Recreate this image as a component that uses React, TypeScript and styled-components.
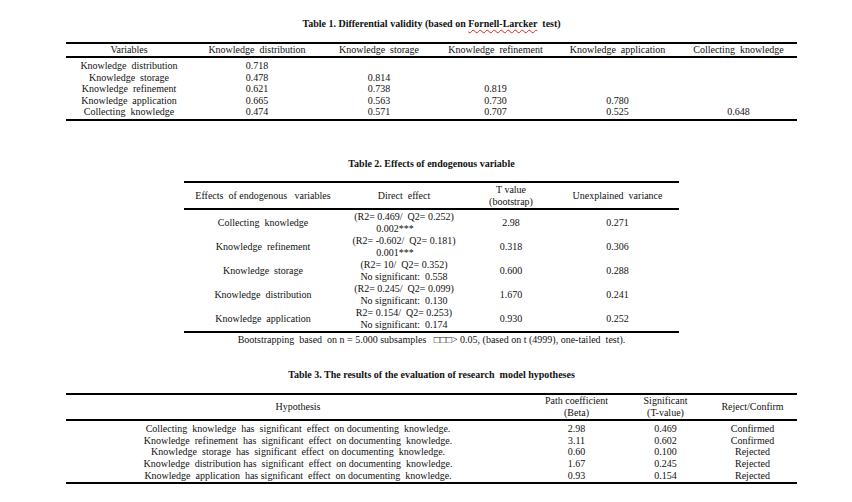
import React from "react";
import styled, { createGlobalStyle } from "styled-components";

const GlobalStyle = createGlobalStyle`
  html, body {
    margin: 0;
    padding: 0;
    background: #fff;
  }
  body {
    font-family: "Liberation Serif", "Times New Roman", serif;
    font-size: 10px;
    color: #111;
  }
`;

const TABLE1_HEAD = [
  "Variables",
  "Knowledge  distribution",
  "Knowledge  storage",
  "Knowledge  refinement",
  "Knowledge  application",
  "Collecting  knowledge",
];

const TABLE1_ROWS = [
  ["Knowledge  distribution", "0.718", "", "", "", ""],
  ["Knowledge  storage", "0.478", "0.814", "", "", ""],
  ["Knowledge  refinement", "0.621", "0.738", "0.819", "", ""],
  ["Knowledge  application", "0.665", "0.563", "0.730", "0.780", ""],
  ["Collecting  knowledge", "0.474", "0.571", "0.707", "0.525", "0.648"],
];

const TABLE2_ROWS = [
  { name: "Collecting  knowledge", r2: "(R2= 0.469/  Q2= 0.252)", sig: "0.002***", stars: true, t: "2.98", u: "0.271" },
  { name: "Knowledge  refinement", r2: "(R2= -0.602/  Q2= 0.181)", sig: "0.001***", stars: true, t: "0.318", u: "0.306" },
  { name: "Knowledge  storage", r2: "(R2= 10/  Q2= 0.352)", sig: "No significant:  0.558", stars: false, t: "0.600", u: "0.288" },
  { name: "Knowledge  distribution", r2: "(R2= 0.245/  Q2= 0.099)", sig: "No significant:  0.130", stars: false, t: "1.670", u: "0.241" },
  { name: "Knowledge  application", r2: "R2= 0.154/  Q2= 0.253)", sig: "No significant:  0.174", stars: false, t: "0.930", u: "0.252" },
];

const TABLE3_ROWS = [
  ["Collecting  knowledge  has  significant  effect  on documenting  knowledge.", "2.98", "0.469", "Confirmed"],
  ["Knowledge  refinement  has  significant  effect  on documenting  knowledge.", "3.11", "0.602", "Confirmed"],
  ["Knowledge  storage  has  significant  effect  on documenting  knowledge.", "0.60", "0.100", "Rejected"],
  ["Knowledge  distribution has  significant  effect  on documenting  knowledge.", "1.67", "0.245", "Rejected"],
  ["Knowledge  application  has significant  effect  on documenting  knowledge.", "0.93", "0.154", "Rejected"],
];

const COLS1 = "126px 130px 114px 119px 125px 117px";
const COLS2 = "158px 124px 90px 123px";
const COLS3 = "464px 93px 85px 89px";

function App() {
  return (
    <>
      <GlobalStyle />
      <Page>
        <Title>
          Table 1. Differential validity (based on <Misspelled>Fornell-Larcker</Misspelled>  test)
        </Title>
        <Table $width={731} $gap={12}>
          <Head $cols={COLS1} $h={12}>
            {TABLE1_HEAD.map((h) => (
              <Cell key={h}>{h}</Cell>
            ))}
          </Head>
          <Body $pt={2} $pb={1.5}>
            {TABLE1_ROWS.map((r) => (
              <Row key={r[0]} $cols={COLS1} $h={11.5}>
                {r.map((c, i) => (
                  <Cell key={i}>{c}</Cell>
                ))}
              </Row>
            ))}
          </Body>
        </Table>

        <Title $mt={37}>Table 2. Effects of endogenous variable</Title>
        <Table $width={495} $gap={11}>
          <Head $cols={COLS2} $h={25}>
            <Cell>Effects  of endogenous   variables</Cell>
            <Cell>Direct  effect</Cell>
            <Stack>
              <span>T value</span>
              <span>(bootstrap)</span>
            </Stack>
            <Cell>Unexplained  variance</Cell>
          </Head>
          <Body $pt={1} $pb={0}>
            {TABLE2_ROWS.map((r) => (
              <Row key={r.name} $cols={COLS2} $h={24}>
                <Cell>{r.name}</Cell>
                <Stack>
                  <span>{r.r2}</span>
                  {r.stars ? <Stars>{r.sig}</Stars> : <span>{r.sig}</span>}
                </Stack>
                <Cell>{r.t}</Cell>
                <Cell>{r.u}</Cell>
              </Row>
            ))}
          </Body>
        </Table>
        <Note>
          Bootstrapping  based  on n = 5.000 subsamples   □□□&gt; 0.05, (based on t (4999), one-tailed  test).
        </Note>

        <Title $mt={23}>Table 3. The results of the evaluation of research  model hypotheses</Title>
        <Table $width={731} $gap={12}>
          <Head $cols={COLS3} $h={24}>
            <Cell>Hypothesis</Cell>
            <Stack>
              <span>Path coefficient</span>
              <span>(Beta)</span>
            </Stack>
            <Stack>
              <span>Significant</span>
              <span>(T-value)</span>
            </Stack>
            <Cell>Reject/Confirm</Cell>
          </Head>
          <Body $pt={2} $pb={1}>
            {TABLE3_ROWS.map((r) => (
              <Row key={r[0]} $cols={COLS3} $h={11.7}>
                {r.map((c, i) => (
                  <Cell key={i}>{c}</Cell>
                ))}
              </Row>
            ))}
          </Body>
        </Table>
      </Page>
    </>
  );
}

export default App;

const Page = styled.div`
  width: 852px;
  box-sizing: border-box;
  padding: 18px 0 0 11px;
  display: flex;
  flex-direction: column;
  align-items: center;
`;

const Title = styled.div<{ $mt?: number }>`
  margin-top: ${(p) => p.$mt ?? 0}px;
  font-weight: bold;
  line-height: 12px;
  white-space: pre;
`;

const Misspelled = styled.span`
  text-decoration: underline wavy #e0201a;
  text-decoration-thickness: 1px;
  text-underline-offset: 2px;
`;

const Table = styled.div<{ $width: number; $gap: number }>`
  width: ${(p) => p.$width}px;
  margin-top: ${(p) => p.$gap}px;
  border-top: 2px solid #000;
  border-bottom: 2px solid #000;
`;

const Head = styled.div<{ $cols: string; $h: number }>`
  display: grid;
  grid-template-columns: ${(p) => p.$cols};
  height: ${(p) => p.$h}px;
  border-bottom: 2px solid #000;
  align-items: center;
`;

const Body = styled.div<{ $pt: number; $pb: number }>`
  padding: ${(p) => p.$pt}px 0 ${(p) => p.$pb}px;
`;

const Row = styled.div<{ $cols: string; $h: number }>`
  display: grid;
  grid-template-columns: ${(p) => p.$cols};
  height: ${(p) => p.$h}px;
  align-items: center;
`;

const Cell = styled.div`
  text-align: center;
  white-space: pre;
  line-height: 12px;
`;

const Stack = styled.div`
  display: flex;
  flex-direction: column;
  align-items: center;
  line-height: 12px;
  white-space: pre;
`;

const Stars = styled.span`
  padding-right: 18px;
`;

const Note = styled.div`
  margin-top: 1px;
  line-height: 12px;
  white-space: pre;
`;
